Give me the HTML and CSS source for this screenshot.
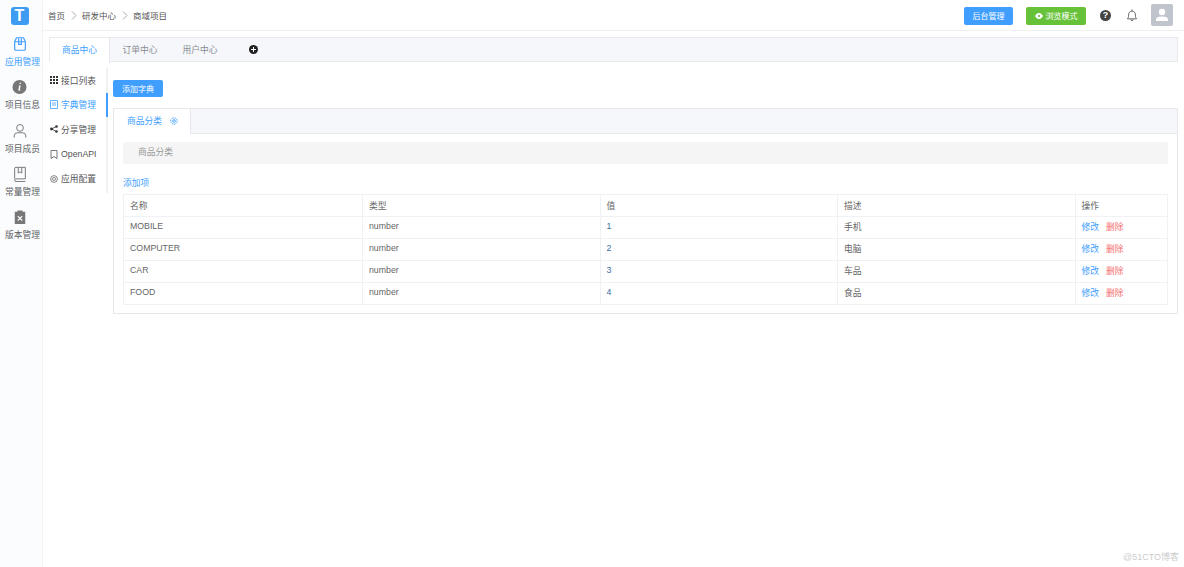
FILE: index.html
```html
<!DOCTYPE html>
<html lang="zh">
<head>
<meta charset="UTF-8" />
<meta name="viewport" content="width=device-width, initial-scale=1" />
<title>字典管理</title>
<link rel="stylesheet" href="styles.css">
</head>
<body>
<div class="app">
    <!-- 左侧导航 -->
    <aside class="sidebar">
        <div class="logo"><span>T</span></div>
        <a class="nav-item active">
            <svg width="16" height="16" viewBox="0 0 18 18" fill="none" stroke="currentColor" stroke-width="1.300"><path d="M3 6.500 5 2h8l2 4.500v8a1.500 1.500 0 0 1-1.500 1.500h-9A1.500 1.500 0 0 1 3 14.500z"/><path d="M3 6.500h12M7.500 2.500v7h3v-7"/></svg>
            <span>应用管理</span>
        </a>
        <a class="nav-item">
            <svg width="15" height="16" viewBox="0 0 16 16"><circle cx="8" cy="8" r="7.500" fill="#777"/><path d="M8.200 3.400h1.500l-.3 1.500H7.900zM7.600 6.400h1.700l-1 4.400h.9l-.2.900H6.600l1-4.400h-.8z" fill="#fff"/></svg>
            <span>项目信息</span>
        </a>
        <a class="nav-item">
            <svg width="16" height="16" viewBox="0 0 18 18" fill="none" stroke="#777" stroke-width="1.100"><circle cx="9" cy="5.500" r="3.800"/><path d="M2.500 16.500v-2a3.500 3.500 0 0 1 3.500-3.500h6a3.500 3.500 0 0 1 3.500 3.500v2"/></svg>
            <span>项目成员</span>
        </a>
        <a class="nav-item">
            <svg width="16" height="16" viewBox="0 0 18 18" fill="none" stroke="#777" stroke-width="1.100"><path d="M3 14V3a1.500 1.500 0 0 1 1.500-1.500H15v13H4.500a1.500 1.500 0 0 0 0 3H15"/><path d="M7 2v6l2-1.500L11 8V2"/></svg>
            <span>常量管理</span>
        </a>
        <a class="nav-item">
            <svg width="14" height="16" viewBox="0 0 16 18"><path d="M2 3h3V1.500h6V3h3v14H2z" fill="#777"/><path d="M5.500 8l5 5M10.500 8l-5 5" stroke="#fff" stroke-width="1.300"/></svg>
            <span>版本管理</span>
        </a>
    </aside>

    <div class="main">
        <header class="topbar">
            <nav class="crumbs">
                <span>首页</span>
                <svg class="sep" width="6" height="9" viewBox="0 0 6 9" fill="none" stroke="#aaa"><path d="M1 .5l4 4-4 4"/></svg>
                <span>研发中心</span>
                <svg class="sep" width="6" height="9" viewBox="0 0 6 9" fill="none" stroke="#aaa"><path d="M1 .5l4 4-4 4"/></svg>
                <span>商域项目</span>
            </nav>
            <div class="top-actions">
                <a class="btn btn-blue btn-admin">后台管理</a>
                <a class="btn btn-green">
                    <svg width="8" height="6" viewBox="0 0 8 6"><path d="M0 3c2-4 6-4 8 0-2 4-6 4-8 0z" fill="#fff"/><circle cx="4" cy="3" r="1.100" fill="#67c23a"/></svg>
                    浏览模式
                </a>
                <span class="help">?</span>
                <svg class="bell" width="12" height="14" viewBox="0 0 14 15" fill="none" stroke="#555" stroke-width="1"><path d="M1.500 12c1.200-1 1.500-2 1.500-4.500C3 4.500 4.800 3 7 3s4 1.500 4 4.500c0 2.500.3 3.500 1.500 4.500zM7 1v2M5.500 12.500a1.500 1.500 0 0 0 3 0"/></svg>
                <div class="avatar">
                    <svg width="14" height="14" viewBox="0 0 14 14" fill="#fff"><circle cx="7" cy="4" r="3.200"/><path d="M1 13v-1.500C1 9.500 3 8.500 7 8.500s6 1 6 3V13z"/></svg>
                </div>
            </div>
        </header>

        <div class="page">
            <div class="app-tabs">
                <a class="app-tab active">商品中心</a>
                <a class="app-tab">订单中心</a>
                <a class="app-tab">用户中心</a>
                <span class="tab-add">
                    <svg width="9" height="9" viewBox="0 0 9 9"><circle cx="4.500" cy="4.500" r="4.500" fill="#222"/><path d="M4.500 2v5M2 4.500h5" stroke="#fff"/></svg>
                </span>
            </div>

            <div class="body-row">
                <ul class="side-menu">
                    <li>
                        <svg width="8" height="8" viewBox="0 0 8 8" fill="#333"><path d="M0 0h2v2H0zM3 0h2v2H3zM6 0h2v2H6zM0 3h2v2H0zM3 3h2v2H3zM6 3h2v2H6zM0 6h2v2H0zM3 6h2v2H3zM6 6h2v2H6z"/></svg>
                        接口列表
                    </li>
                    <li class="active">
                        <svg width="8" height="9" viewBox="0 0 8 9" fill="none" stroke="#409eff" stroke-width=".8"><path d="M.5.500h7v8h-7zM2 3h4M2 5h4"/></svg>
                        字典管理
                    </li>
                    <li>
                        <svg width="8" height="8" viewBox="0 0 8 8" fill="#333"><circle cx="1.500" cy="4" r="1.400"/><circle cx="6.500" cy="1.500" r="1.300"/><circle cx="6.500" cy="6.500" r="1.300"/><path d="M1.500 4l5-2.500M1.500 4l5 2.500" stroke="#333" stroke-width=".8"/></svg>
                        分享管理
                    </li>
                    <li>
                        <svg width="8" height="9" viewBox="0 0 8 9" fill="none" stroke="#555" stroke-width=".8"><path d="M1 .500h6v8L4 6.500 1 8.500z"/></svg>
                        OpenAPI
                    </li>
                    <li>
                        <svg width="8" height="8" viewBox="0 0 9 9" fill="none" stroke="#555" stroke-width=".8"><circle cx="4.500" cy="4.500" r="3.800"/><circle cx="4.500" cy="4.500" r="1.700"/></svg>
                        应用配置
                    </li>
                </ul>

                <section class="content">
                    <a class="btn btn-blue btn-add">添加字典</a>

                    <div class="card">
                        <div class="card-tabs">
                            <a class="card-tab">
                                商品分类
                                <svg width="8" height="8" viewBox="0 0 9 9" fill="none" stroke="#409eff" stroke-width="1"><circle cx="4.500" cy="4.500" r="3.600" stroke-dasharray="1.600 .6"/><circle cx="4.500" cy="4.500" r="1.500"/></svg>
                            </a>
                        </div>
                        <div class="card-body">
                            <div class="dict-name">商品分类</div>
                            <a class="add-item">添加项</a>
                            <table class="dict-table">
                                <thead>
                                    <tr><th>名称</th><th>类型</th><th>值</th><th>描述</th><th>操作</th></tr>
                                </thead>
                                <tbody>
                                    <tr><td>MOBILE</td><td>number</td><td class="val">1</td><td>手机</td><td><a class="edit">修改</a><a class="del">删除</a></td></tr>
                                    <tr><td>COMPUTER</td><td>number</td><td class="val">2</td><td>电脑</td><td><a class="edit">修改</a><a class="del">删除</a></td></tr>
                                    <tr><td>CAR</td><td>number</td><td class="val">3</td><td>车品</td><td><a class="edit">修改</a><a class="del">删除</a></td></tr>
                                    <tr><td>FOOD</td><td>number</td><td class="val">4</td><td>食品</td><td><a class="edit">修改</a><a class="del">删除</a></td></tr>
                                </tbody>
                            </table>
                        </div>
                    </div>
                </section>
            </div>
        </div>
    </div>
</div>
<div class="watermark">@51CTO博客</div>
</body>
</html>
```

FILE: styles.css
```css
* {
    box-sizing: border-box;
}
html, body {
    height: 100%;
}
body {
    margin: 0;
    background: #fff;
    color: #606266;
    font-family: "Liberation Sans", "Noto Sans CJK SC", sans-serif;
    font-size: 8.750px;
    overflow: hidden;
}
a {
    text-decoration: none;
}
.app {
    display: flex;
    height: 567px;
}

/* 左侧导航 */
.sidebar {
    width: 43px;
    flex: none;
    background: #fbfcfd;
    border-right: 1px solid #f0f1f3;
    display: flex;
    flex-direction: column;
    align-items: center;
    padding: 7px 0 0 3px;
}
.logo {
    width: 18px;
    height: 18px;
    margin: 0 6px 11px 0;
    border-radius: 3px;
    background: #3d9bf2;
    color: #fff;
    font-size: 16px;
    font-weight: bold;
    line-height: 18px;
    text-align: center;
}
.nav-item {
    height: 43.300px;
    color: #606266;
    display: flex;
    flex-direction: column;
    align-items: center;
    white-space: nowrap;
}
.nav-item svg {
    height: 16px;
    margin: 0 6px 3px 0;
}
.nav-item.active {
    color: #409eff;
}

.main {
    flex: 1;
    min-width: 0;
}
.topbar {
    height: 31px;
    border-bottom: 1px solid #f0f0f2;
    padding: 0 11px 0 5px;
    display: flex;
    align-items: center;
    justify-content: space-between;
}
.crumbs {
    display: flex;
    align-items: center;
    color: #555;
    font-size: 8.500px;
}
.sep {
    margin: 0 5.500px;
}
.top-actions {
    display: flex;
    align-items: center;
}
.btn {
    display: flex;
    align-items: center;
    justify-content: center;
    border-radius: 2px;
    color: #fff;
    font-size: 8px;
}
.btn-blue {
    background: #409eff;
}
.btn-green {
    width: 60px;
    height: 18px;
    margin: 1px 14px 0 0;
    gap: 3px;
    background: #67c23a;
}
.btn-admin {
    width: 49px;
    height: 18px;
    margin: 1px 13px 0 0;
}
.help {
    width: 11px;
    height: 11px;
    margin-right: 15px;
    border-radius: 50%;
    background: #444;
    color: #fff;
    font-size: 9px;
    font-weight: bold;
    line-height: 11px;
    text-align: center;
}
.bell {
    margin-right: 13px;
}
.avatar {
    width: 22px;
    height: 22px;
    border-radius: 2px;
    background: #c0c4cc;
    display: flex;
    align-items: center;
    justify-content: center;
}

.page {
    padding: 6px 6px 0;
}
.app-tabs {
    height: 25px;
    background: #f5f7fa;
    border: 1px solid #e8eaee;
    display: flex;
    align-items: center;
}
.app-tab {
    width: 60px;
    height: 24px;
    color: #8a8d93;
    line-height: 24px;
    text-align: center;
}
.app-tab.active {
    height: 25px;
    margin-top: 1px;
    background: #fff;
    border-right: 1px solid #e8eaee;
    color: #409eff;
}
.tab-add {
    display: flex;
    margin-left: 19px;
}

.body-row {
    display: flex;
}
.side-menu {
    width: 59px;
    height: 125px;
    margin: 6px 5px 0 0;
    padding: 0;
    list-style: none;
    border-right: 2px solid #f0f1f3;
    flex: none;
}
.side-menu li {
    height: 24.600px;
    margin-right: -2px;
    display: flex;
    align-items: center;
    gap: 3px;
    padding-left: 1px;
    color: #555;
    white-space: nowrap;
}
.side-menu li.active {
    border-right: 2px solid #409eff;
    color: #409eff;
}

.content {
    flex: 1;
    min-width: 0;
    padding-top: 18px;
}
.btn-add {
    width: 50px;
    height: 17px;
}
.card {
    margin-top: 11px;
    border: 1px solid #e6e8ec;
    height: 206px;
}
.card-tabs {
    height: 25px;
    background: #f5f7fa;
    border-bottom: 1px solid #e8eaee;
}
.card-tab {
    width: 77px;
    height: 25px;
    background: #fff;
    border-right: 1px solid #e4e7ed;
    color: #409eff;
    display: flex;
    align-items: center;
    gap: 8px;
    padding: 0 0 2px 13px;
}
.card-body {
    padding: 8px 9px 0;
}
.dict-name {
    height: 22px;
    padding-left: 15px;
    background: #f5f5f5;
    border-radius: 2px;
    color: #999;
    line-height: 20px;
}
.add-item {
    display: block;
    height: 30px;
    color: #409eff;
    line-height: 38px;
}
.dict-table {
    width: 100%;
    border-collapse: collapse;
    table-layout: fixed;
}
.dict-table th, .dict-table td {
    height: 22px;
    padding: 0 6px 3px;
    border: 1px solid #f0f1f4;
    color: #666;
    font-weight: normal;
    text-align: left;
    white-space: nowrap;
}
.dict-table th {
    padding-bottom: 1px;
}
.dict-table th:first-child {
    width: 239px;
}
.dict-table th:nth-child(2), .dict-table th:nth-child(3), .dict-table th:nth-child(4) {
    width: 237.500px;
}
.dict-table td.val {
    color: #3d6a9e;
}
.dict-table a {
    margin-right: 7px;
}
.dict-table a.edit {
    color: #409eff;
}
.dict-table a.del {
    color: #f56c6c;
}

.watermark {
    position: absolute;
    right: 5px;
    bottom: 4px;
    color: #ccc;
    font-size: 9px;
}
```
